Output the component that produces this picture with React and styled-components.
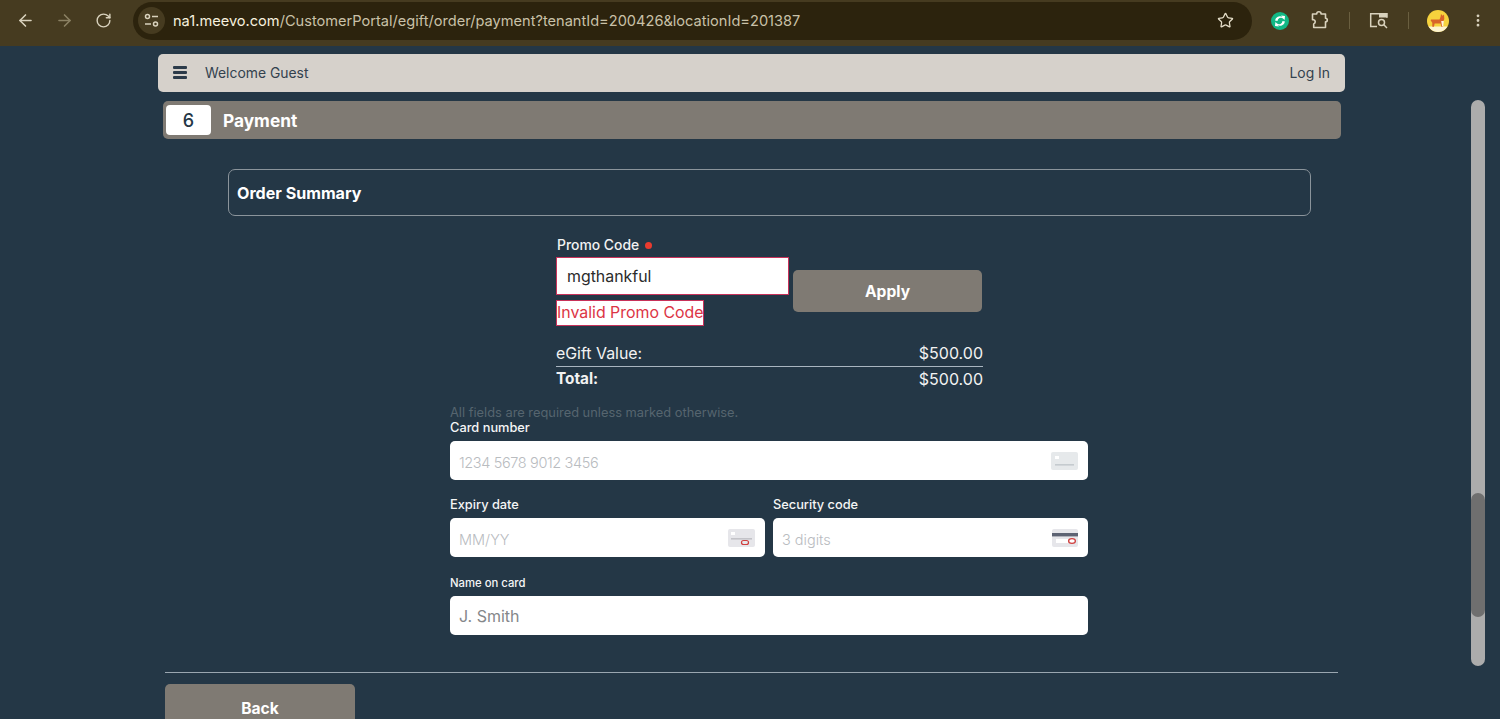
import React from "react";
import styled, { createGlobalStyle } from "styled-components";
import { ArrowLeft, ArrowRight, RotateCw, Star, MoreVertical } from "lucide-react";

const Global = createGlobalStyle`
  html, body { margin: 0; padding: 0; background: #243746; }
  body { font-family: Inter, "Liberation Sans", sans-serif; }
  * { box-sizing: border-box; }
`;

const Page = styled.div`
  height: 719px;
  width: 1500px;
  display: flex;
  flex-direction: column;
  overflow: hidden;
  background: #243746;
`;

const BrowserBar = styled.div`
  height: 46px;
  flex: none;
  display: flex;
  align-items: center;
  background: #463b20;
  padding: 0 0 5px 15px;
  color: #d9d2bd;
`;

const NavButton = styled.span`
  width: 20px;
  height: 20px;
  margin-right: 19px;
  display: flex;
  align-items: center;
  justify-content: center;
  color: ${(p) => (p.$dim ? "#8b8163" : "#d9d2bd")};
`;

const Omnibox = styled.div`
  width: 1119px;
  height: 38px;
  margin-left: 1px;
  border-radius: 19px;
  background: #2c230d;
  display: flex;
  align-items: center;
  padding: 0 18px 0 5px;
`;

const SiteInfo = styled.span`
  width: 27px;
  height: 27px;
  border-radius: 50%;
  background: #463b20;
  display: flex;
  align-items: center;
  justify-content: center;
  flex: none;
`;

const Url = styled.span`
  margin-left: 8px;
  flex: 1;
  font-size: 14.6px;
  color: #eee6cf;
  white-space: nowrap;
  span { color: #c9c1a8; }
  b { font-weight: 400; color: #f6f0df; }
`;

const Tools = styled.div`
  display: flex;
  align-items: center;
  margin-left: 18px;
`;

const ToolSlot = styled.span`
  display: flex;
  align-items: center;
  justify-content: center;
  width: ${(p) => p.$w || 20}px;
  margin-right: ${(p) => p.$gap || 0}px;
`;

const ToolDivider = styled.span`
  width: 1px;
  height: 17px;
  background: #6a5f40;
  margin-right: ${(p) => p.$gap}px;
`;

const Main = styled.main`
  flex: 1;
  min-height: 0;
  padding: 8px 0 0 158px;
  position: relative;
`;

const Shell = styled.div`
  width: 1187px;
`;

const TopBar = styled.header`
  height: 38px;
  background: #d6d1cb;
  border-radius: 5px;
  display: flex;
  align-items: center;
  padding: 0 15px 1px;
  color: #33414e;
  font-size: 13.9px;
`;

const Burger = styled.span`
  width: 14px;
  height: 13px;
  margin-right: 18px;
  display: flex;
  flex-direction: column;
  justify-content: space-between;
  i {
    display: block;
    height: 2.6px;
    border-radius: 1px;
    background: #2c3b4a;
  }
`;

const Welcome = styled.span`
  flex: 1;
`;

const SectionBar = styled.div`
  width: 1178px;
  height: 38px;
  margin: 9px 0 0 5px;
  background: #7f7a73;
  border-radius: 5px;
  display: flex;
  align-items: center;
  padding-left: 3px;
  color: #fff;
  font-size: 17.3px;
  font-weight: 700;
`;

const StepBadge = styled.span`
  width: 45px;
  height: 30px;
  border-radius: 4px;
  background: #fff;
  color: #243746;
  display: flex;
  align-items: center;
  justify-content: center;
  font-size: 18px;
  font-weight: 500;
  margin-right: 12px;
`;

const SummaryBox = styled.div`
  width: 1083px;
  height: 47px;
  margin: 30px 0 0 70px;
  border: 1px solid #8b949b;
  border-radius: 7px;
  display: flex;
  align-items: center;
  padding-left: 8px;
  color: #fff;
  font-size: 16.1px;
  font-weight: 700;
`;

const PromoBlock = styled.div`
  width: 427px;
  margin: 20px 0 0 398px;
`;

const PromoLabel = styled.label`
  display: flex;
  align-items: center;
  padding-left: 1px;
  height: 17px;
  font-size: 13.9px;
  font-weight: 500;
  color: #f2f2f2;
  &::after {
    content: "";
    width: 7px;
    height: 7px;
    margin: 2px 0 0 6px;
    border-radius: 50%;
    background: #ea3b2f;
  }
`;

const PromoRow = styled.div`
  display: flex;
  align-items: flex-start;
  margin-top: 4px;
`;

const PromoLeft = styled.div`
  width: 233px;
`;

const PromoInput = styled.div`
  height: 38px;
  background: #fff;
  border: 1px solid #c8325a;
  display: flex;
  align-items: center;
  padding-left: 10px;
  font-size: 15.9px;
  color: #2b2b2b;
`;

const PromoError = styled.span`
  display: inline-flex;
  align-items: center;
  height: 26px;
  margin-top: 5px;
  width: 148px;
  background: #fff;
  border: 1px solid #c8325a;
  padding-bottom: 1px;
  font-size: 15.9px;
  color: #dc3545;
  white-space: nowrap;
`;

const ActionButton = styled.div`
  background: #7f7a73;
  border-radius: 5px;
  color: #fff;
  font-weight: 700;
  font-size: 15.6px;
  display: flex;
  align-items: center;
  justify-content: center;
`;

const ApplyButton = styled(ActionButton)`
  width: 189px;
  height: 42px;
  margin: 13px 0 0 4px;
`;

const Totals = styled.div`
  margin-top: 14px;
  color: #f2f2f2;
  font-size: 16px;
`;

const TotalRow = styled.div`
  display: flex;
  justify-content: space-between;
  align-items: center;
  height: ${(p) => (p.$total ? 24 : 26)}px;
  border-top: ${(p) => (p.$total ? "1px solid #a9b5c0" : "none")};
  span:first-child {
    font-weight: ${(p) => (p.$total ? 700 : 400)};
    font-size: ${(p) => (p.$total ? 15.3 : 15.9)}px;
  }
`;

const CardForm = styled.div`
  width: 638px;
  margin: 15px 0 0 292px;
`;

const FormNote = styled.div`
  font-size: 12.85px;
  line-height: 15px;
  color: #56656f;
`;

const FieldLabel = styled.label`
  display: block;
  font-size: ${(p) => p.$size || 12.8}px;
  line-height: 16px;
  font-weight: 500;
  color: #f5f5f5;
  margin-bottom: 5px;
`;

const FieldRow = styled.div`
  display: flex;
  gap: 8px;
  margin-top: ${(p) => p.$top}px;
`;

const Field = styled.div`
  flex: ${(p) => (p.$grow ? `0 0 ${p.$grow}px` : 1)};
  min-width: 0;
`;

const InputBox = styled.div`
  height: 39px;
  background: #fff;
  border-radius: 5px;
  display: flex;
  align-items: center;
  justify-content: space-between;
  padding: 0 10px 0 9px;
`;

const Placeholder = styled.span`
  padding-top: ${(p) => (p.$strong ? 0 : 3)}px;
  font-size: ${(p) => (p.$strong ? 16 : 14.5)}px;
  letter-spacing: ${(p) => (p.$tight ? -0.37 : 0)}px;
  color: ${(p) => (p.$strong ? "#85878a" : "#b9bcbf")};
  font-weight: ${(p) => (p.$strong ? 400 : 300)};
`;

const Divider = styled.hr`
  width: 1173px;
  margin: 37px 0 0 7px;
  border: none;
  border-top: 1px solid #9aa6b0;
`;

const BackButton = styled(ActionButton)`
  width: 190px;
  height: 35px;
  margin: 11px 0 0 7px;
  padding-top: 13px;
  border-radius: 5px 5px 0 0;
`;

const Track = styled.div`
  position: absolute;
  left: 1471px;
  top: 54px;
  width: 14px;
  height: 566px;
  border-radius: 7px;
  background: #acacac;
`;

const Thumb = styled.div`
  position: absolute;
  top: 393px;
  left: 0;
  width: 14px;
  height: 124px;
  border-radius: 7px;
  background: #6f6f6f;
`;

const SiteIcon = () => (
  <svg width="17" height="17" viewBox="0 0 17 17" fill="none" stroke="#d9d2bd" strokeWidth="1.5">
    <circle cx="4.5" cy="4.5" r="2" />
    <path d="M9 4.5h6M2 12h6" />
    <circle cx="12.5" cy="12" r="2" />
  </svg>
);

const SyncIcon = () => (
  <svg width="18" height="18" viewBox="0 0 18 18">
    <circle cx="9" cy="9" r="9" fill="#12b886" />
    <path d="M4 8.5 A5 5 0 0 1 11.5 5 L10 3.6 L14 4 L13.6 8 L12 6.4 A3.5 3.5 0 0 0 6.5 9Z" fill="#fff" />
    <path d="M14 9.5 A5 5 0 0 1 6.5 13 L8 14.4 L4 14 L4.4 10 L6 11.6 A3.5 3.5 0 0 0 11.5 9Z" fill="#fff" />
  </svg>
);

const ExtensionIcon = () => (
  <svg width="19" height="19" viewBox="0 0 19 19" fill="none" stroke="#d9d2bd" strokeWidth="1.6" strokeLinejoin="round">
    <path d="M2 3.5h4.2a2.2 2.2 0 0 1 4.4 0H15v4.2a1.8 1.8 0 0 1 0 3.6V17H3.2v-3.6a2.2 2.2 0 0 0 0-4.2H2z" transform="translate(0.5 -0.5)" />
  </svg>
);

const SideSearchIcon = () => (
  <svg width="20" height="18" viewBox="0 0 20 18" fill="none" stroke="#d9d2bd" strokeWidth="1.5">
    <path d="M8 14.5H1.7V1.7H18v4" />
    <rect x="10" y="1.5" width="8" height="4" fill="#d9d2bd" stroke="none" />
    <circle cx="12.5" cy="10.5" r="3" />
    <path d="M14.8 12.8 18 16" />
  </svg>
);

const AvatarIcon = () => (
  <svg width="22" height="22" viewBox="0 0 22 22">
    <defs>
      <clipPath id="avatarClip">
        <circle cx="11" cy="11" r="11" />
      </clipPath>
    </defs>
    <g clipPath="url(#avatarClip)">
      <rect width="22" height="22" fill="#f6d23d" />
      <rect y="16.5" width="22" height="5.5" fill="#fdf3d0" />
      <path d="M4 9.5h8.5l1-2.5.5-3 1.6 1.8 1.4-1.3.3 4.5-1.3 2.8v5h-1.6l-.8-3.3H7.6l-.6 3.3H5.3v-4l-1.6-2.3z" fill="#d8642a" />
      <path d="M14.2 11h2.6l-.6 5.5h-1.1z" fill="#fff3dc" />
    </g>
  </svg>
);

const PlainCard = () => (
  <svg width="27" height="18" viewBox="0 0 27 18">
    <rect width="27" height="18" rx="2" fill="#e6e9eb" />
    <rect x="4" y="4" width="4" height="3" fill="#fff" />
    <rect x="4" y="12" width="19" height="1.6" fill="#c5cbcf" />
  </svg>
);

const ExpiryCard = () => (
  <svg width="27" height="18" viewBox="0 0 27 18">
    <rect width="27" height="18" rx="2" fill="#e6e6ea" />
    <rect x="3" y="3" width="4" height="3" fill="#fff" />
    <rect x="3" y="9" width="21" height="1.6" fill="#c3c3c8" />
    <rect x="13.5" y="11.5" width="7" height="4" rx="2" fill="none" stroke="#d0403f" strokeWidth="1.2" />
  </svg>
);

const SecurityCard = () => (
  <svg width="26" height="18" viewBox="0 0 26 18">
    <rect width="26" height="18" rx="2" fill="#e6e6ea" />
    <rect y="4" width="26" height="3.4" fill="#5d6373" />
    <rect x="4" y="10" width="12" height="4" fill="#fff" />
    <ellipse cx="20" cy="12" rx="3.4" ry="2.4" fill="#fff" stroke="#d0403f" strokeWidth="1.3" />
  </svg>
);

export default function App() {
  return (
    <Page>
      <Global />
      <BrowserBar>
        <NavButton><ArrowLeft size={19} strokeWidth={2} /></NavButton>
        <NavButton $dim><ArrowRight size={19} strokeWidth={2} /></NavButton>
        <NavButton><RotateCw size={17} strokeWidth={2} /></NavButton>
        <Omnibox>
          <SiteInfo><SiteIcon /></SiteInfo>
          <Url><b>na1.meevo.com</b><span>/CustomerPortal/egift/order/payment?tenantId=200426&amp;locationId=201387</span></Url>
          <Star size={17} strokeWidth={1.8} color="#e4ddc8" />
        </Omnibox>
        <Tools>
          <ToolSlot $gap={19}><SyncIcon /></ToolSlot>
          <ToolSlot $gap={20}><ExtensionIcon /></ToolSlot>
          <ToolDivider $gap={19} />
          <ToolSlot $gap={19}><SideSearchIcon /></ToolSlot>
          <ToolDivider $gap={18} />
          <ToolSlot $w={22} $gap={21}><AvatarIcon /></ToolSlot>
          <ToolSlot $w={16}><MoreVertical size={19} strokeWidth={2.2} /></ToolSlot>
        </Tools>
      </BrowserBar>
      <Main>
        <Shell>
          <TopBar>
            <Burger><i /><i /><i /></Burger>
            <Welcome>Welcome Guest</Welcome>
            <span>Log In</span>
          </TopBar>
          <SectionBar>
            <StepBadge>6</StepBadge>
            Payment
          </SectionBar>
          <SummaryBox>Order Summary</SummaryBox>
          <PromoBlock>
            <PromoLabel>Promo Code</PromoLabel>
            <PromoRow>
              <PromoLeft>
                <PromoInput>mgthankful</PromoInput>
                <PromoError>Invalid Promo Code</PromoError>
              </PromoLeft>
              <ApplyButton>Apply</ApplyButton>
            </PromoRow>
            <Totals>
              <TotalRow><span>eGift Value:</span><span>$500.00</span></TotalRow>
              <TotalRow $total><span>Total:</span><span>$500.00</span></TotalRow>
            </Totals>
          </PromoBlock>
          <CardForm>
            <FormNote>All fields are required unless marked otherwise.</FormNote>
            <FieldLabel>Card number</FieldLabel>
            <InputBox><Placeholder $tight>1234 5678 9012 3456</Placeholder><PlainCard /></InputBox>
            <FieldRow $top={17}>
              <Field $grow={315}>
                <FieldLabel>Expiry date</FieldLabel>
                <InputBox><Placeholder>MM/YY</Placeholder><ExpiryCard /></InputBox>
              </Field>
              <Field>
                <FieldLabel>Security code</FieldLabel>
                <InputBox><Placeholder>3 digits</Placeholder><SecurityCard /></InputBox>
              </Field>
            </FieldRow>
            <FieldRow $top={18}>
              <Field>
                <FieldLabel $size={11.3}>Name on card</FieldLabel>
                <InputBox><Placeholder $strong>J. Smith</Placeholder></InputBox>
              </Field>
            </FieldRow>
          </CardForm>
          <Divider />
          <BackButton>Back</BackButton>
        </Shell>
        <Track><Thumb /></Track>
      </Main>
    </Page>
  );
}
